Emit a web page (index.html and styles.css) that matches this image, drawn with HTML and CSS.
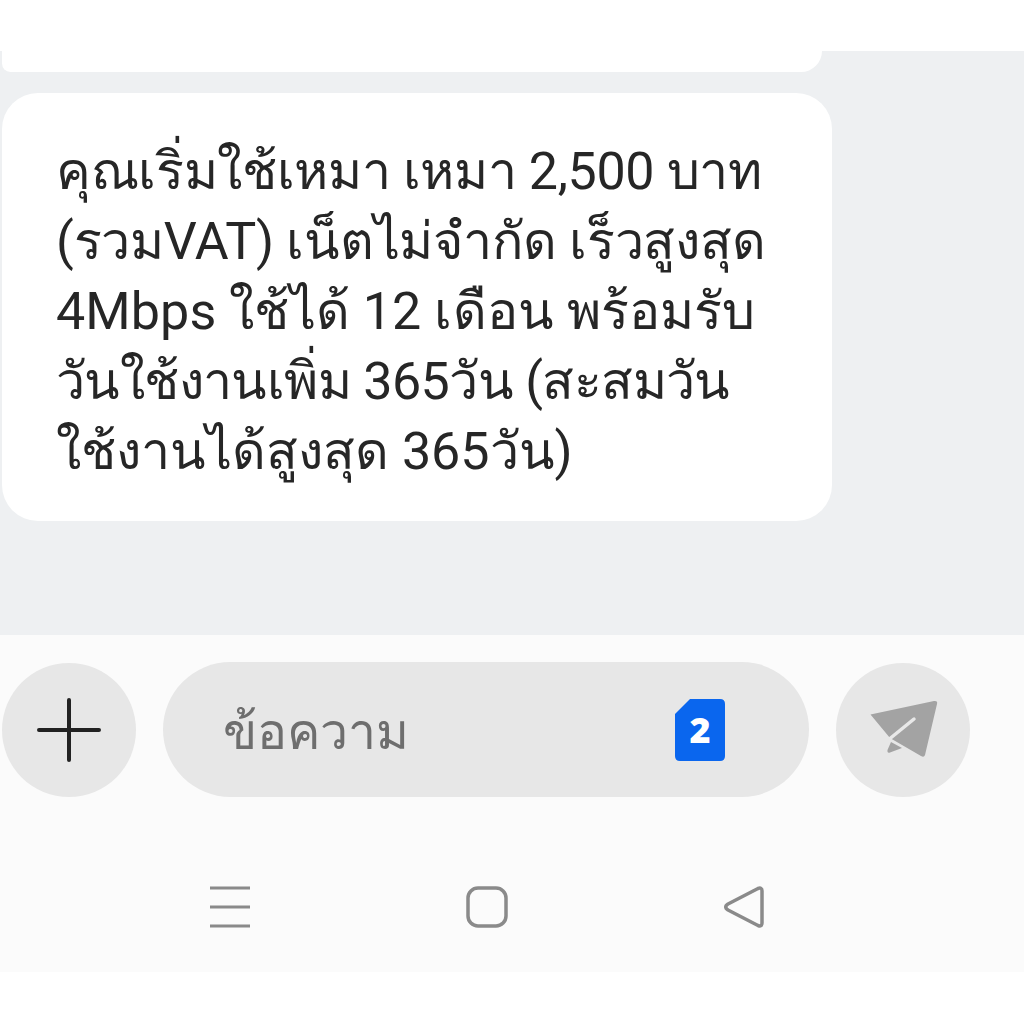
FILE: index.html
```html
<!DOCTYPE html>
<html lang="th">
<head>
<meta charset="utf-8">
<title>ข้อความ</title>
<link rel="stylesheet" href="styles.css">
</head>
<body>
<div class="screen">
  <header class="top"></header>
  <main class="chat">
    <div class="bubble bubble-prev"></div>
    <div class="bubble bubble-main">
      <p class="line line-a">คุณเริ่มใช้เหมา เหมา 2,500 บาท</p>
      <p class="line line-b">(รวมVAT) เน็ตไม่จำกัด เร็วสูงสุด</p>
      <p class="line line-c">4Mbps ใช้ได้ 12 เดือน พร้อมรับ</p>
      <p class="line line-d">วันใช้งานเพิ่ม 365วัน (สะสมวัน</p>
      <p class="line">ใช้งานได้สูงสุด 365วัน)</p>
    </div>
  </main>
  <section class="composer">
    <div class="input-row">
      <div class="round plus">
        <svg width="66" height="66" viewBox="0 0 66 66"><path d="M33 3V63M3 33H63" stroke="#222" stroke-width="4" stroke-linecap="round" fill="none"/></svg>
      </div>
      <div class="field">
        <span class="placeholder">ข้อความ</span>
        <svg class="sim" width="52" height="64" viewBox="0 0 52 64"><path d="M16 1H46Q51 1 51 6V58Q51 63 46 63H6Q1 63 1 58V16Z" fill="#0a66ee"/><text x="26" y="45" class="sim-num" text-anchor="middle">2</text></svg>
      </div>
      <div class="round send">
        <svg width="72" height="62" viewBox="0 0 72 62"><path d="M3.500 15.500L67 2Q71 1.500 70 5L58 56Q57 59 54 57L23 39Z" fill="#a3a3a3"/><path d="M24 43L35 49L23 53.500Q20 54.500 20.500 51Z" fill="#a3a3a3"/><path d="M47 20L23 39.500" stroke="#e8e8e8" stroke-width="3.500" stroke-linecap="round"/></svg>
      </div>
    </div>
    <nav class="nav">
      <svg width="44" height="44" viewBox="0 0 44 44"><path d="M2 3H42M2 22H42M2 41H42" stroke="#8a8a8a" stroke-width="3" fill="none"/></svg>
      <svg width="44" height="44" viewBox="0 0 44 44"><rect x="3" y="3" width="38" height="38" rx="10" stroke="#8a8a8a" stroke-width="3.500" fill="none"/></svg>
      <svg width="44" height="44" viewBox="0 0 44 44"><path d="M5 22Q4 21 7 19L37 3.500Q41 2 41 6V38Q41 42 37 40.500L7 25Q4 23 5 22Z" stroke="#8a8a8a" stroke-width="3.500" stroke-linejoin="round" fill="none"/></svg>
    </nav>
  </section>
  <footer class="bottom"></footer>
</div>
</body>
</html>
```
FILE: styles.css
```css
* { box-sizing: border-box; }
html, body { margin: 0; padding: 0; }
body { background: #fff; }
.screen { width: 1024px; height: 1024px; display: flex; flex-direction: column; overflow: hidden; font-family: Roboto, "Noto Sans", "DejaVu Sans", sans-serif; }
.top { height: 51px; flex: none; background: #fff; }
.chat { height: 584px; flex: none; background: #eef0f2; padding-left: 2px; display: flex; flex-direction: column; gap: 21px; }
.bubble { background: #fff; }
.bubble-prev { width: 820px; height: 21px; border-radius: 0 0 30px 12px; }
.bubble-main { width: 830px; height: 428px; border-radius: 36px; padding: 44px 0 0 54px; }
.line { margin: 0; font-size: 52px; line-height: 70px; color: #262626; white-space: nowrap; }
.line-a { letter-spacing: -0.35px; }
.line-b { letter-spacing: -0.25px; }
.line-c { letter-spacing: 0.1px; }
.line-d { letter-spacing: -0.6px; }
.composer { height: 337px; flex: none; background: #fbfbfb; padding-top: 27px; display: flex; flex-direction: column; }
.input-row { display: flex; align-items: center; padding-left: 2px; height: 135px; }
.round { width: 134px; height: 134px; border-radius: 50%; background: #e7e7e7; display: flex; align-items: center; justify-content: center; flex: none; }
.field { width: 646px; height: 135px; margin: 0 27px; border-radius: 68px; background: #e7e7e7; display: flex; align-items: center; justify-content: space-between; padding: 0 83px 0 60px; }
.placeholder { font-size: 50px; color: #6e6e6e; padding-top: 3px; }
.sim-num { font-size: 36px; font-weight: 800; fill: #fff; font-family: "Open Sans", sans-serif; }
.nav { display: flex; justify-content: space-between; padding: 88px 259px 0 208px; }
.bottom { flex: 1; background: #fff; }
```
